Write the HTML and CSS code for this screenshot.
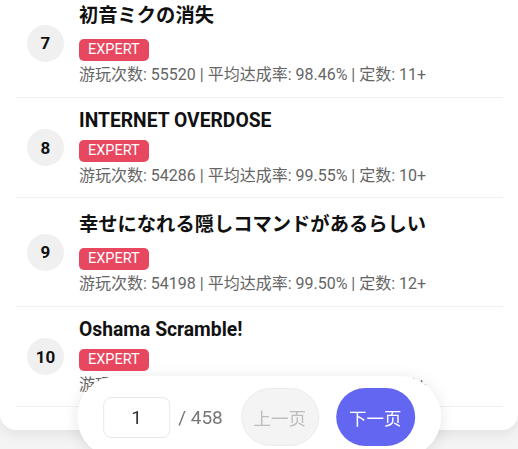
FILE: index.html
```html
<!DOCTYPE html>
<html lang="zh">
<head>
<meta charset="utf-8">
<link rel="stylesheet" href="styles.css">
</head>
<body>
<div class="card">
  <ul class="list">
    <li class="item">
      <div class="rank">7</div>
      <div class="info">
        <div class="title title-ja">初音ミクの消失</div>
        <span class="badge">EXPERT</span>
        <div class="stats">游玩次数: 55520 | 平均达成率: 98.46% | 定数: 11+</div>
      </div>
    </li>
    <li class="item">
      <div class="rank">8</div>
      <div class="info">
        <div class="title">INTERNET OVERDOSE</div>
        <span class="badge">EXPERT</span>
        <div class="stats">游玩次数: 54286 | 平均达成率: 99.55% | 定数: 10+</div>
      </div>
    </li>
    <li class="item">
      <div class="rank">9</div>
      <div class="info">
        <div class="title title-ja">幸せになれる隠しコマンドがあるらしい</div>
        <span class="badge">EXPERT</span>
        <div class="stats">游玩次数: 54198 | 平均达成率: 99.50% | 定数: 12+</div>
      </div>
    </li>
    <li class="item">
      <div class="rank">10</div>
      <div class="info">
        <div class="title">Oshama Scramble!</div>
        <span class="badge">EXPERT</span>
        <div class="stats">游玩次数: 53961 | 平均达成率: 99.62% | 定数: 12+</div>
      </div>
    </li>
  </ul>
</div>
<nav class="pager">
  <div class="page-input">1</div>
  <span class="page-total">/ 458</span>
  <button class="btn btn-prev" disabled>上一页</button>
  <button class="btn btn-next">下一页</button>
</nav>
</body>
</html>
```

FILE: styles.css
```css
* { box-sizing: border-box; }
html, body {
  margin: 0;
  padding: 0;
}
body {
  background: #f4f4f5;
  font-family: Roboto, "Noto Sans CJK SC", sans-serif;
  color: #111;
  overflow: hidden;
  height: 449px;
}
.card {
  background: #fff;
  margin-top: -11px;
  border-radius: 0 0 16px 16px;
  box-shadow: 0 4px 14px rgba(0, 0, 0, 0.08);
  padding-bottom: 23px;
}
.list {
  list-style: none;
  margin: 0;
  padding: 0 15px 0 16px;
}
.item {
  display: flex;
  align-items: center;
  gap: 15px;
  padding: 11px 0 10.5px 11px;
  border-bottom: 1px solid #f0f0f0;
}
.rank {
  flex: none;
  width: 37px;
  height: 37px;
  border-radius: 50%;
  background: #f0f0f0;
  display: flex;
  align-items: center;
  justify-content: center;
  font-weight: 700;
  font-size: 17px;
  color: #111;
}
.info {
  display: flex;
  flex-direction: column;
  align-items: flex-start;
}
.title {
  font-family: Roboto, "Noto Sans CJK JP", sans-serif;
  font-weight: 700;
  font-size: 19.3px;
  color: #111;
  margin-bottom: 8px;
  white-space: nowrap;
}
.title-ja {
  line-height: 31px;
}
.badge {
  display: inline-block;
  background: #e8485f;
  color: #fff;
  font-size: 14.5px;
  line-height: 22px;
  height: 22px;
  padding: 0 9px;
  border-radius: 5px;
}
.stats {
  margin-top: 2px;
  font-size: 16px;
  line-height: 23px;
  color: #666;
  white-space: nowrap;
}
.pager {
  position: fixed;
  left: 50%;
  bottom: -9px;
  transform: translateX(-50%);
  display: flex;
  align-items: center;
  padding: 12px 26px;
  background: #fff;
  border-radius: 41px;
  box-shadow: 0 2px 16px rgba(0, 0, 0, 0.1);
}
.page-input {
  width: 67px;
  height: 41px;
  border: 1px solid #e8e8e8;
  border-radius: 8px;
  display: flex;
  align-items: center;
  justify-content: center;
  font-size: 19px;
  color: #333;
}
.page-total {
  margin-left: 8px;
  font-size: 19px;
  color: #777;
  white-space: nowrap;
}
.btn {
  height: 58px;
  width: 78px;
  border-radius: 29px;
  font-family: "Noto Sans CJK SC", sans-serif;
  font-size: 17.5px;
  border: none;
  padding: 0;
}
.btn-prev {
  margin-left: 18px;
  background: #f4f4f4;
  border: 1px solid #ececec;
  color: #bdbdbd;
}
.btn-next {
  margin-left: 17px;
  width: 79px;
  background: #6366f1;
  color: #fff;
}
```
